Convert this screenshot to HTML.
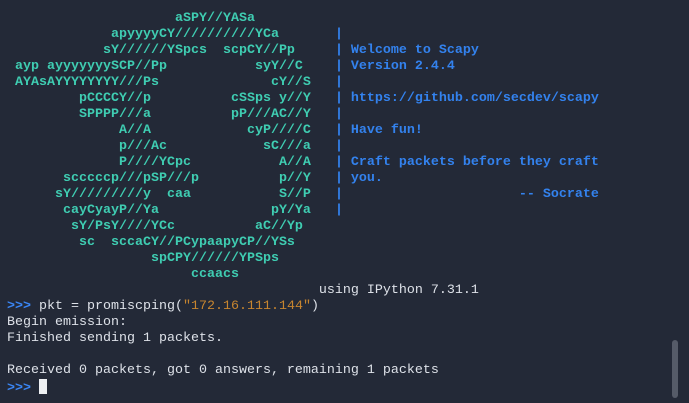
<!DOCTYPE html>
<html><head><meta charset="utf-8"><style>
html,body{margin:0;padding:0}
body{width:689px;height:403px;background:#232937;overflow:hidden;position:relative;font-family:"Liberation Mono","DejaVu Sans Mono",monospace}
pre{position:absolute;left:7px;top:11px;margin:0;font-size:13.33px;line-height:16px;color:#dde1e8;font-family:inherit}
.a{color:#3fcdb2;font-weight:bold}
.b{color:#3382ee;font-weight:bold}
.p{color:#3a86f5;font-weight:bold}
.s{color:#c7852f}
.c{display:inline-block;width:8px;height:15px;background:#eef0f3;vertical-align:-3px}
.sb{position:absolute;left:672px;top:340px;width:6px;height:58px;border-radius:3px;background:#555b68}
</style></head><body>
<pre><span class="a">                     aSPY//YASa</span>
<span class="a">             apyyyyCY//////////YCa       </span><span class="b">|</span>
<span class="a">            sY//////YSpcs  scpCY//Pp     </span><span class="b">| Welcome to Scapy</span>
<span class="a"> ayp ayyyyyyySCP//Pp           syY//C    </span><span class="b">| Version 2.4.4</span>
<span class="a"> AYAsAYYYYYYYY///Ps              cY//S   </span><span class="b">|</span>
<span class="a">         pCCCCY//p          cSSps y//Y   </span><span class="b">| https://github.com/secdev/scapy</span>
<span class="a">         SPPPP///a          pP///AC//Y   </span><span class="b">|</span>
<span class="a">              A//A            cyP////C   </span><span class="b">| Have fun!</span>
<span class="a">              p///Ac            sC///a   </span><span class="b">|</span>
<span class="a">              P////YCpc           A//A   </span><span class="b">| Craft packets before they craft</span>
<span class="a">       scccccp///pSP///p          p//Y   </span><span class="b">| you.</span>
<span class="a">      sY/////////y  caa           S//P   </span><span class="b">|                      -- Socrate</span>
<span class="a">       cayCyayP//Ya              pY/Ya   </span><span class="b">|</span>
<span class="a">        sY/PsY////YCc          aC//Yp</span>
<span class="a">         sc  sccaCY//PCypaapyCP//YSs</span>
<span class="a">                  spCPY//////YPSps</span>
<span class="a">                       ccaacs</span>
                                       using IPython 7.31.1
<span class="p">&gt;&gt;&gt;</span> pkt = promiscping(<span class="s">"172.16.111.144"</span>)
Begin emission:
Finished sending 1 packets.

Received 0 packets, got 0 answers, remaining 1 packets
<span class="p">&gt;&gt;&gt;</span> <span class="c"></span></pre>
<div class="sb"></div>
</body></html>
